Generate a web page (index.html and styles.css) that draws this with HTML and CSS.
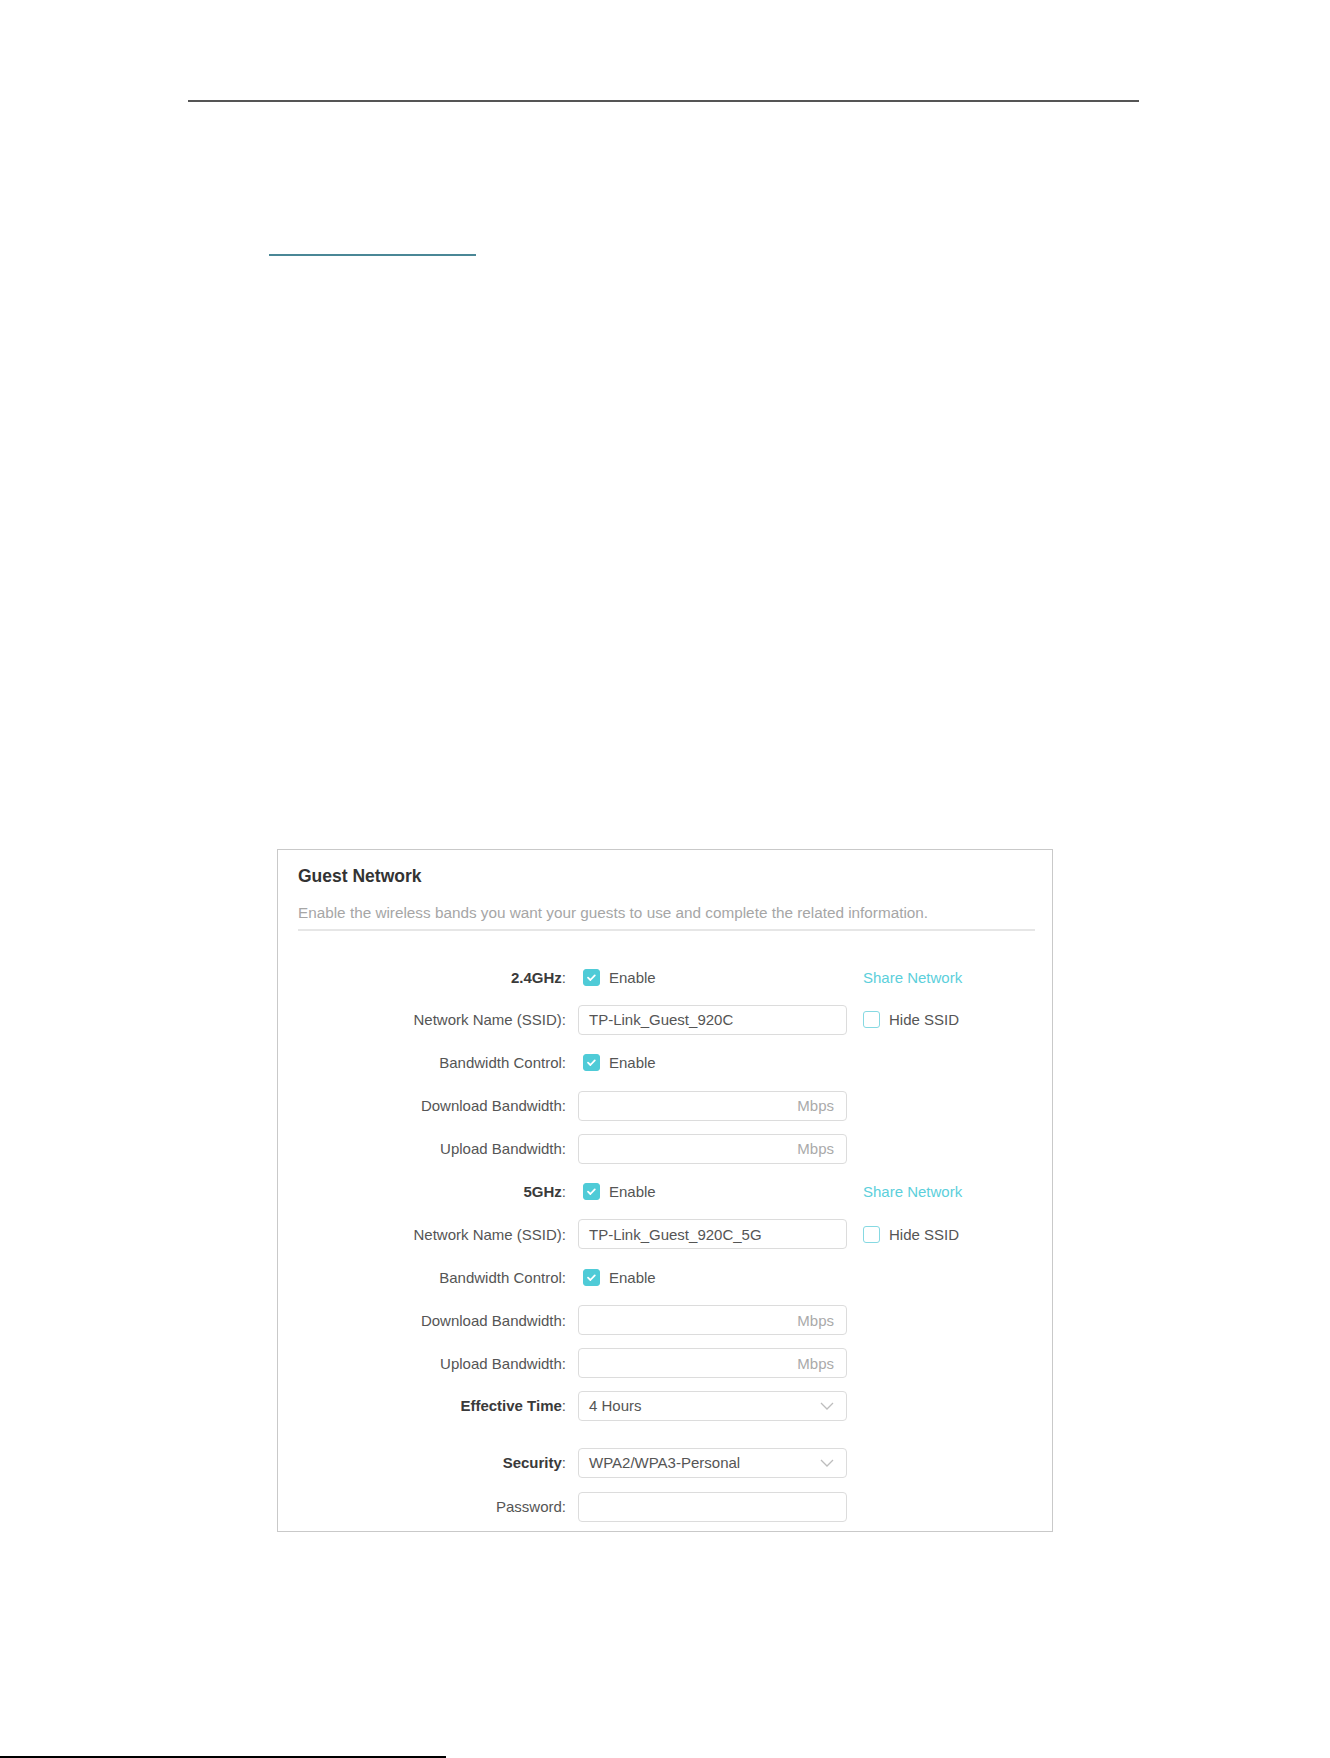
FILE: index.html
```html
<!DOCTYPE html>
<html lang="en">
  <head>
    <meta charset="UTF-8" />
    <meta name="viewport" content="width=device-width, initial-scale=1.0" />
    <title>Guest Network</title>
    <link rel="stylesheet" href="styles.css">
  </head>
  <body>
    <div class="page-rule"></div>
    <a class="doc-link" href="#"></a>

    <section class="panel">
      <h2>Guest Network</h2>
      <p class="intro">Enable the wireless bands you want your guests to use and complete the related information.</p>

      <div class="form">
        <!-- 2.4GHz band -->
        <div class="row">
          <label class="row-label"><b>2.4GHz</b>:</label>
          <div class="control"><span class="check on"></span>Enable</div>
          <a class="extra share" href="#">Share Network</a>
        </div>
        <div class="row">
          <label class="row-label">Network Name (SSID):</label>
          <div class="field">TP-Link_Guest_920C</div>
          <div class="extra"><span class="check"></span>Hide SSID</div>
        </div>
        <div class="row">
          <label class="row-label">Bandwidth Control:</label>
          <div class="control"><span class="check on"></span>Enable</div>
        </div>
        <div class="row">
          <label class="row-label">Download Bandwidth:</label>
          <div class="field"><span></span><span class="unit">Mbps</span></div>
        </div>
        <div class="row">
          <label class="row-label">Upload Bandwidth:</label>
          <div class="field"><span></span><span class="unit">Mbps</span></div>
        </div>

        <!-- 5GHz band -->
        <div class="row">
          <label class="row-label"><b>5GHz</b>:</label>
          <div class="control"><span class="check on"></span>Enable</div>
          <a class="extra share" href="#">Share Network</a>
        </div>
        <div class="row">
          <label class="row-label">Network Name (SSID):</label>
          <div class="field">TP-Link_Guest_920C_5G</div>
          <div class="extra"><span class="check"></span>Hide SSID</div>
        </div>
        <div class="row">
          <label class="row-label">Bandwidth Control:</label>
          <div class="control"><span class="check on"></span>Enable</div>
        </div>
        <div class="row">
          <label class="row-label">Download Bandwidth:</label>
          <div class="field"><span></span><span class="unit">Mbps</span></div>
        </div>
        <div class="row">
          <label class="row-label">Upload Bandwidth:</label>
          <div class="field"><span></span><span class="unit">Mbps</span></div>
        </div>

        <div class="row">
          <label class="row-label"><b>Effective Time</b>:</label>
          <div class="field select">4 Hours
            <svg width="14" height="8" viewBox="0 0 14 8"><polyline points="1,1 7,7 13,1" /></svg>
          </div>
        </div>
        <div class="row gap-above">
          <label class="row-label"><b>Security</b>:</label>
          <div class="field select">WPA2/WPA3-Personal
            <svg width="14" height="8" viewBox="0 0 14 8"><polyline points="1,1 7,7 13,1" /></svg>
          </div>
        </div>
        <div class="row">
          <label class="row-label">Password:</label>
          <div class="field"></div>
        </div>
      </div>
    </section>

    <div class="foot-rule"></div>
  </body>
</html>
```

FILE: styles.css
```css
body {
  margin: 0;
  font-family: "Liberation Sans", Arial, sans-serif;
  background-color: #fff;
}

.page-rule {
  margin: 100px 0 0 188px;
  width: 951px;
  height: 2px;
  background-color: #555;
}

.doc-link {
  display: block;
  margin: 152px 0 0 269px;
  width: 207px;
  height: 0;
  border-bottom: 2px solid #4a8796;
}

.panel {
  box-sizing: border-box;
  margin: 593px 0 0 277px;
  width: 776px;
  border: 1px solid #c9c9c9;
  padding: 16px 17px 9px 20px;
}

.panel h2 {
  margin: 0;
  font-size: 17.5px;
  line-height: 20px;
  color: #333;
}

.intro {
  margin: 18px 0 0 0;
  padding-bottom: 7px;
  border-bottom: 2px solid #e6e6e6;
  font-size: 15.3px;
  line-height: 18px;
  color: #a6a6a6;
}

.form {
  margin-top: 31px;
}

.row {
  display: flex;
  align-items: center;
  height: 30px;
  margin-bottom: 12.9px;
  font-size: 15px;
  color: #555;
}

.row:last-child {
  margin-bottom: 0;
}

/* extra space before the security block */
.row.gap-above {
  margin-top: 27px;
  margin-bottom: 14px;
}

.row-label {
  box-sizing: border-box;
  width: 280px;
  padding-right: 12px;
  text-align: right;
}

.row-label b {
  color: #3a3a3a;
}

.control {
  display: flex;
  align-items: center;
  width: 269px;
  padding-left: 5px;
  box-sizing: border-box;
}

.field {
  box-sizing: border-box;
  display: flex;
  align-items: center;
  justify-content: space-between;
  width: 269px;
  height: 30px;
  padding: 0 12px 0 10px;
  border: 1px solid #dcdcdc;
  border-radius: 4px;
}

.unit {
  color: #aaa;
}

.select svg {
  fill: none;
  stroke: #bdbdbd;
  stroke-width: 1.3;
}

.extra {
  display: flex;
  align-items: center;
  margin-left: 16px;
}

.share {
  color: #5ccfdb;
  text-decoration: none;
}

/* checkbox boxes */
.check {
  box-sizing: border-box;
  width: 17px;
  height: 17px;
  margin-right: 9px;
  border: 1.5px solid #86d9e2;
  border-radius: 3px;
  background-color: #fff;
}

.check.on {
  border-color: #4fcbd7;
  background-color: #4fcbd7;
  background-image: url("data:image/svg+xml,%3Csvg xmlns='http://www.w3.org/2000/svg' viewBox='0 0 17 17'%3E%3Cpath d='M5 8.6 L7.4 11 L11.8 6.4' fill='none' stroke='white' stroke-width='1.8' stroke-linecap='round' stroke-linejoin='round'/%3E%3C/svg%3E");
  background-position: center;
  background-size: 17px 17px;
}

.foot-rule {
  margin-top: 224px;
  width: 446px;
  height: 2px;
  background-color: #000;
}
```
